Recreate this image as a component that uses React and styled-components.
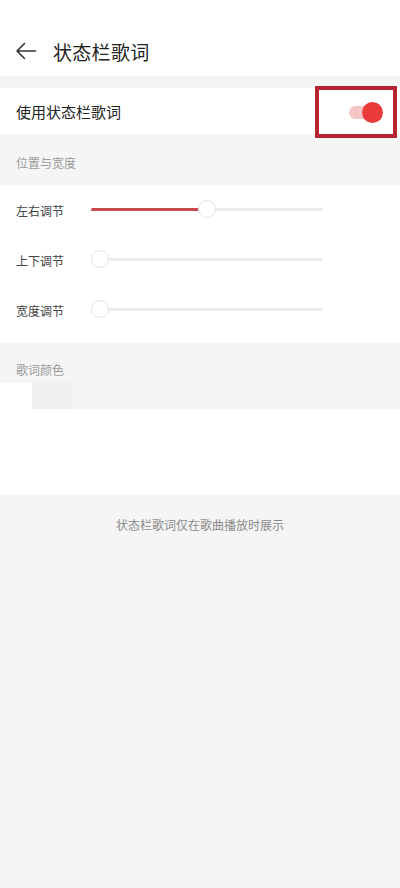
import React from "react";
import styled, { createGlobalStyle } from "styled-components";

const Global = createGlobalStyle`
  html, body {
    margin: 0;
    padding: 0;
    background: #f5f5f5;
    font-family: "Noto Sans CJK SC", "Noto Sans", sans-serif;
  }
`;

const Page = styled.div`
  width: 400px;
  min-height: 888px;
  background: #f5f5f5;
  display: flex;
  flex-direction: column;
`;

const Header = styled.div`
  height: 76px;
  background: #fff;
  display: flex;
  align-items: center;
  padding: 0 0 0 15px;
  box-sizing: border-box;
  padding-top: 26px;
  gap: 16px;
`;

const Title = styled.div`
  font-size: 19px;
  color: #222;
  letter-spacing: 0.3px;
`;

const Gap = styled.div`
  height: ${(p) => p.h}px;
`;

const SwitchRow = styled.div`
  height: 46px;
  background: #fff;
  display: flex;
  align-items: center;
  justify-content: space-between;
  padding-left: 16px;
  position: relative;
  font-size: 15px;
  color: #222;
`;

const Mark = styled.div`
  position: absolute;
  right: 3px;
  top: -2px;
  width: 82px;
  height: 52px;
  box-sizing: border-box;
  border: 4px solid #b3262f;
  display: flex;
  align-items: center;
  justify-content: flex-end;
  padding-right: 14px;
`;

const Track = styled.div`
  width: 30px;
  height: 13px;
  border-radius: 7px;
  background: #f6c6c6;
  position: relative;
`;

const Knob = styled.div`
  position: absolute;
  right: -4px;
  top: -4px;
  width: 21px;
  height: 21px;
  border-radius: 50%;
  background: #ea3b3b;
`;

const SectionTitle = styled.div`
  height: ${(p) => p.h}px;
  box-sizing: border-box;
  display: flex;
  align-items: center;
  padding-left: 16px;
  padding-top: ${(p) => p.shift}px;
  font-size: 12px;
  color: #9a9a9a;
`;

const SliderBlock = styled.div`
  background: #fff;
  padding: 0 0 8px;
`;

const SliderRow = styled.div`
  height: 50px;
  display: flex;
  align-items: center;
  padding-left: 16px;
`;

const Label = styled.div`
  width: 75px;
  font-size: 12px;
  color: #444;
`;

const Rail = styled.div`
  width: 232px;
  height: 3px;
  background: #ececec;
  border-radius: 2px;
  position: relative;
  margin-top: -2px;
`;

const Fill = styled.div`
  position: absolute;
  left: 0;
  top: 0;
  height: 3px;
  border-radius: 2px;
  background: #c8484f;
`;

const Thumb = styled.div`
  position: absolute;
  top: -8px;
  width: 18px;
  height: 18px;
  margin-left: -9px;
  border-radius: 50%;
  background: #fff;
  border: 1px solid #e6e6e6;
  box-sizing: border-box;
`;

const ColorRow = styled.div`
  height: 26px;
  display: flex;
`;

const Blank = styled.div`
  width: 32px;
  background: #fff;
`;

const Swatch = styled.div`
  width: 40px;
  background: #efefef;
`;

const WhiteBlock = styled.div`
  height: 86px;
  background: #fff;
`;

const Footer = styled.div`
  text-align: center;
  font-size: 12px;
  color: #8a8a8a;
  padding-top: 21px;
`;

const BackArrow = () => (
  <svg width="22" height="18" viewBox="0 0 22 18" fill="none">
    <path d="M20.5 9H2M9.5 1.5L2 9l7.5 7.5" stroke="#333" strokeWidth="1.6" strokeLinecap="round" strokeLinejoin="round" />
  </svg>
);

const Slider = ({ label, value }) => (
  <SliderRow>
    <Label>{label}</Label>
    <Rail>
      <Fill style={{ width: `${value * 100}%` }} />
      <Thumb style={{ left: `${value * 100}%` }} />
    </Rail>
  </SliderRow>
);

export default function App() {
  return (
    <Page>
      <Global />
      <Header>
        <BackArrow />
        <Title>状态栏歌词</Title>
      </Header>
      <Gap h={12} />
      <SwitchRow>
        使用状态栏歌词
        <Mark>
          <Track>
            <Knob />
          </Track>
        </Mark>
      </SwitchRow>
      <SectionTitle h={51} shift={6}>位置与宽度</SectionTitle>
      <SliderBlock>
        <Slider label="左右调节" value={0.5} />
        <Slider label="上下调节" value={0.04} />
        <Slider label="宽度调节" value={0.04} />
      </SliderBlock>
      <SectionTitle h={40} shift={12}>歌词颜色</SectionTitle>
      <ColorRow>
        <Blank />
        <Swatch />
      </ColorRow>
      <WhiteBlock />
      <Footer>状态栏歌词仅在歌曲播放时展示</Footer>
    </Page>
  );
}
